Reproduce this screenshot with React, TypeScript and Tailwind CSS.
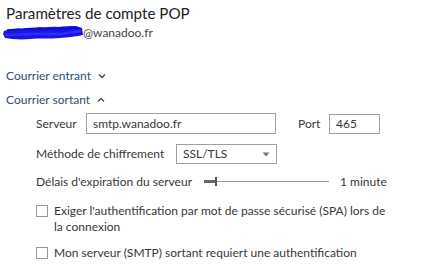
import React from "react";

export default function App() {
  return (
    <div
      className="w-[423px] h-[273px] bg-white overflow-hidden text-[#333] relative whitespace-nowrap"
      style={{ fontFamily: 'Lato, "Open Sans", sans-serif' }}
    >
      <div className="pl-[6px] pt-[1px] text-[15.2px] leading-[24px] text-[#222]">Paramètres de compte POP</div>
      <div className="flex items-center h-[16px] text-[12px] text-[#444]">
        <svg width="82" height="14" viewBox="0 0 82 14" className="ml-[2px]">
          <path
            d="M2 5 C8 3 14 2 20 3 C26 1 32 2 38 1 C44 2 50 0 56 1 C62 0 68 0 74 0 L80 2 L81 9 C72 11 66 11 58 12 C48 13 38 12 28 13 C18 14 10 13 3 12 L1 8 Z"
            fill="#1a14e6"
          />
          <path d="M3 9 L30 8 L58 8 L79 5" stroke="#2d2cf8" strokeWidth="2.5" fill="none" />
          <path d="M5 4 L25 3 L50 3 L76 2" stroke="#0c0ad0" strokeWidth="1.5" fill="none" />
        </svg>
        <span className="-ml-[1px]">@wanadoo.fr</span>
      </div>

      <div className="mt-[26px] pl-[6px] flex items-center gap-[7px] text-[12px] text-[#2f4e6e] h-[18px]">
        <span>Courrier entrant</span>
        <svg width="8" height="6" viewBox="0 0 8 6"><path d="M1 1.5 L4 4.5 L7 1.5" stroke="#2f4e6e" strokeWidth="1.4" fill="none" /></svg>
      </div>
      <div className="mt-[6px] pl-[6px] flex items-center gap-[7px] text-[12px] text-[#2f4e6e] h-[18px]">
        <span>Courrier sortant</span>
        <svg width="8" height="6" viewBox="0 0 8 6"><path d="M1 4.5 L4 1.5 L7 4.5" stroke="#2f4e6e" strokeWidth="1.4" fill="none" /></svg>
      </div>

      <div className="pl-[36px] text-[12px] text-[#383838]">
        <div className="mt-[4px] flex items-center h-[21px]">
          <span className="w-[50px]">Serveur</span>
          <div className="w-[190px] h-[21px] border border-[#a0a0a0] flex items-center px-[6px]">smtp.wanadoo.fr</div>
          <span className="ml-[22px] w-[31px]">Port</span>
          <div className="w-[51px] h-[20px] border border-[#a0a0a0] flex items-center px-[6px]">465</div>
        </div>
        <div className="mt-[10px] flex items-center h-[20px]">
          <span className="w-[140px]">Méthode de chiffrement</span>
          <div className="w-[101px] h-[20px] border border-[#a0a0a0] flex items-center justify-between px-[6px]">
            <span>SSL/TLS</span>
            <svg width="8" height="5" viewBox="0 0 8 5"><path d="M0.5 0.5 L7.5 0.5 L4 4.5 Z" fill="#777" /></svg>
          </div>
        </div>
        <div className="mt-[9px] flex items-center h-[18px]">
          <span className="w-[168px]">Délais d'expiration du serveur</span>
          <div className="relative w-[125px] h-[10px]">
            <div className="absolute left-0 right-0 top-[4px] h-[1px] bg-[#999]" />
            <div className="absolute left-0 w-[12px] top-[3px] h-[3px] bg-[#666]" />
            <div className="absolute left-[11px] top-0 w-[2px] h-[9px] bg-[#555]" />
          </div>
          <span className="ml-[11px]">1 minute</span>
        </div>
        <div className="mt-[12px] flex items-start">
          <div className="w-[12px] h-[12px] border border-[#999] mt-[2px] shrink-0" />
          <div className="ml-[6px] leading-[16px] whitespace-normal w-[340px]">Exiger l'authentification par mot de passe sécurisé (SPA) lors de la connexion</div>
        </div>
        <div className="mt-[10px] flex items-start">
          <div className="w-[12px] h-[12px] border border-[#999] mt-[2px] shrink-0" />
          <div className="ml-[6px] leading-[16px]">Mon serveur (SMTP) sortant requiert une authentification</div>
        </div>
      </div>
    </div>
  );
}
